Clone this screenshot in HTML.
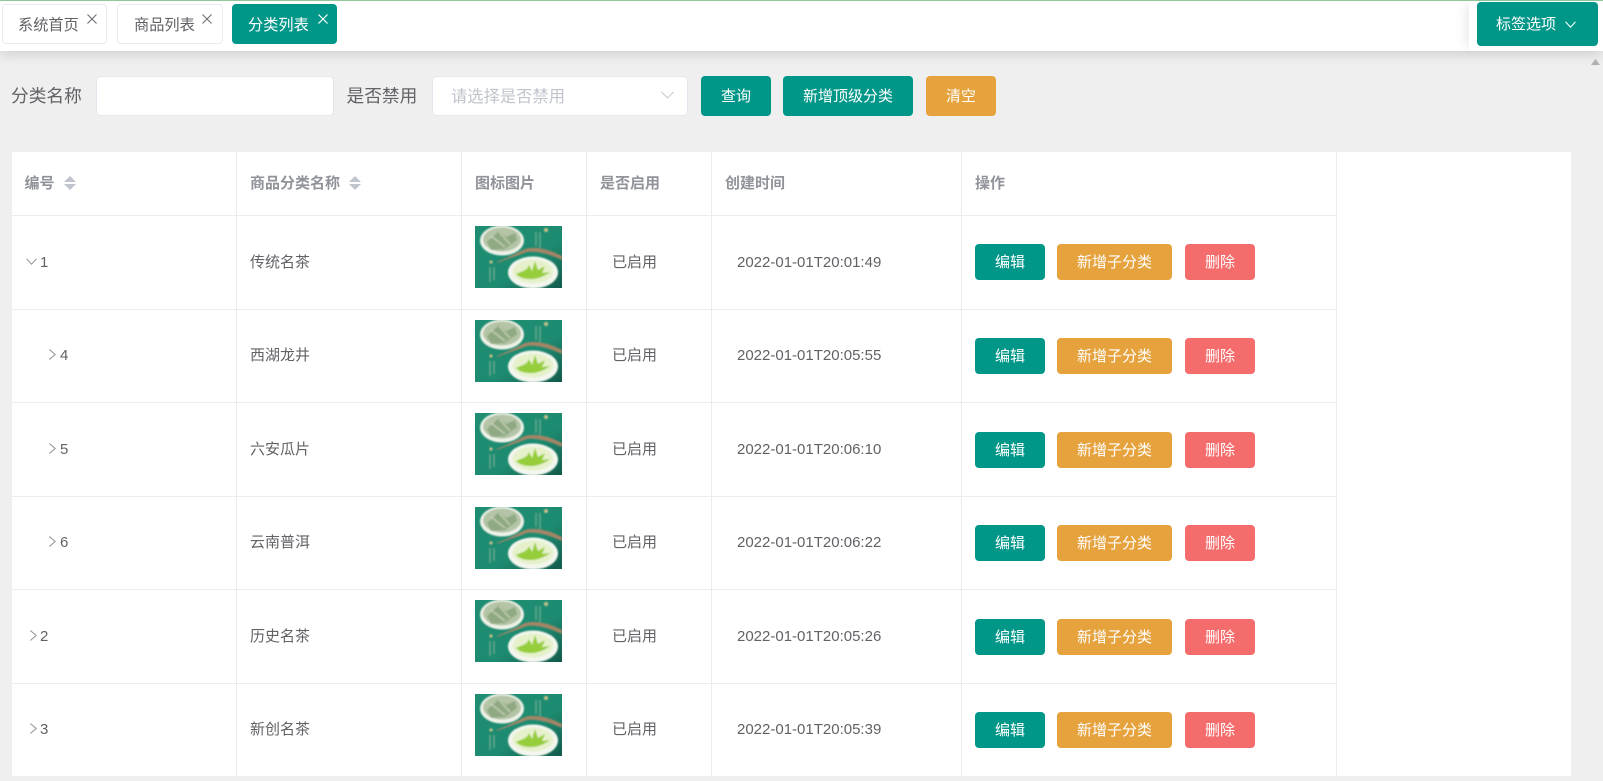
<!DOCTYPE html>
<html lang="zh">
<head>
<meta charset="utf-8">
<title>分类列表</title>
<style>
*{box-sizing:border-box}
html,body{margin:0;padding:0;width:1603px;height:781px;overflow:hidden;background:#efefef;font-family:"Liberation Sans","Noto Sans CJK SC",sans-serif;color:#606266}
.a{position:absolute}
#hd{left:0;top:0;width:1603px;height:51px;background:#fff;border-top:1px solid #8fc79a;box-shadow:0 3px 12px rgba(0,0,0,.14)}
.tab{position:absolute;top:4px;height:40px;border:1px solid #e9ebf0;border-radius:4px;background:#fff;font-size:15.2px;line-height:41px;color:#606266}
.tab span{position:absolute;top:0}
.tab svg{position:absolute;top:8px}
.tab.on{background:#009688;border-color:#009688;color:#fff}
#rt{left:1469px;top:1px;width:134px;height:50px;background:#fff;box-shadow:-8px 0 10px -4px rgba(0,0,0,.08)}
.btn{position:absolute;border-radius:4px;color:#fff;text-align:center;font-size:15px}
.t{background:#009688}.o{background:#e6a23c}.r{background:#f56c6c}
.lbl{position:absolute;top:76px;line-height:40px;font-size:17.7px;color:#606266}
.inp{position:absolute;top:76px;height:40px;background:#fff;border:1px solid #e4e7ed;border-radius:5px}
#tb{left:12px;top:152px;width:1559px;height:624px;background:#fff}
.vl{position:absolute;top:152px;height:624px;width:1px;background:#ececec}
.hl{position:absolute;left:12px;width:1325px;height:1px;background:#ececec}
.th{position:absolute;top:152px;line-height:64px;font-size:15px;font-weight:700;color:#909399}
.c{position:absolute;font-size:15px;line-height:22px;height:22px;white-space:nowrap;color:#606266}
.img{position:absolute;left:475px;width:87px;height:62px;display:block}
.b1,.b2,.b3{height:36px;line-height:37px}
.b1{left:975px;width:70px}.b2{left:1057px;width:115px}.b3{left:1185px;width:70px}
.up{position:absolute;width:0;height:0;border-left:6.5px solid transparent;border-right:6.5px solid transparent;border-bottom:6px solid #c0c4cc}
.dn{position:absolute;width:0;height:0;border-left:6.5px solid transparent;border-right:6.5px solid transparent;border-top:6px solid #c0c4cc}
</style>
</head>
<body>
<svg width="0" height="0" style="position:absolute">
<defs>
<linearGradient id="g" x1="0" y1="0" x2="1" y2="1"><stop offset="0" stop-color="#1f8d72"/><stop offset=".6" stop-color="#1d8b70"/><stop offset="1" stop-color="#125a4b"/></linearGradient>
<filter id="bl" x="-5%" y="-5%" width="110%" height="110%"><feGaussianBlur stdDeviation=".9"/></filter>
<symbol id="tea" viewBox="0 0 87 62" preserveAspectRatio="none">
<rect width="87" height="62" fill="url(#g)"/>
<g filter="url(#bl)">
<ellipse cx="27" cy="14.5" rx="22" ry="15" fill="#eef2e8"/>
<ellipse cx="27" cy="13.5" rx="19" ry="12" fill="#b4c4a6"/>
<path d="M12 16 L24 5 L31 11 L40 7 L42 14 L30 23 L16 24Z" fill="#8fa983"/>
<path d="M16 10 L30 21 M24 6 L35 18" stroke="#d3dcc3" stroke-width="1.6" stroke-opacity=".7"/>
<path d="M22 37 C32 33 42 30 52 26 C62 25 74 28 87 34 L87 30 C74 23 60 20 50 23 C42 27 32 32 22 36Z" fill="#a38566"/>
<ellipse cx="58" cy="46.5" rx="25" ry="16" fill="#f3f6ee"/>
<ellipse cx="58" cy="45.5" rx="20.5" ry="12" fill="#e6f1cc"/>
<path d="M41 48 C47 45 52 45 54 39 L57 45 L60 35 L63 44 L70 40 L67 47 L75 46 C67 52 60 53 56 53 C50 53 45 52 41 48Z" fill="#96ce3a"/>
<circle cx="71" cy="4" r="2" fill="#c9c08a"/>
<circle cx="16" cy="36" r="1.6" fill="#c9c08a"/>
<path d="M61 6V20M65 6V22M15 41V56M19 41V54" stroke="#8db79d" stroke-width="1.4" stroke-opacity=".7"/>
</g>
</symbol>
<symbol id="cr" viewBox="0 0 10 14"><path d="M1.5 1.5 L8 7 L1.5 12.5" fill="none" stroke="#8d9096" stroke-width="1.1"/></symbol>
<symbol id="cd" viewBox="0 0 14 10"><path d="M1.5 2 L7 8 L12.5 2" fill="none" stroke="#8d9096" stroke-width="1.1"/></symbol>
</defs>
</svg>

<div class="a" id="hd"></div>
<div class="a" id="rt"></div>

<div class="tab" style="left:2px;width:105px"><span style="left:15px">系统首页</span><svg width="12" height="12" style="left:83px" viewBox="0 0 12 12"><path d="M1.5 1.5L10.5 10.5M10.5 1.5L1.5 10.5" stroke="#6b6e73" stroke-width="1.1"/></svg></div>
<div class="tab" style="left:117px;width:106px"><span style="left:16px">商品列表</span><svg width="12" height="12" style="left:83px" viewBox="0 0 12 12"><path d="M1.5 1.5L10.5 10.5M10.5 1.5L1.5 10.5" stroke="#6b6e73" stroke-width="1.1"/></svg></div>
<div class="tab on" style="left:232px;width:105px"><span style="left:15px">分类列表</span><svg width="12" height="12" style="left:84px" viewBox="0 0 12 12"><path d="M1.5 1.5L10.5 10.5M10.5 1.5L1.5 10.5" stroke="#fff" stroke-width="1.2"/></svg></div>

<div class="btn t" style="left:1477px;top:2px;width:121px;height:44px;line-height:45px;text-align:left;padding-left:19px">标签选项<svg width="13" height="9" viewBox="0 0 14 10" style="position:absolute;left:87px;top:18px"><path d="M1.5 2L7 8L12.5 2" fill="none" stroke="#fff" stroke-width="1.2"/></svg></div>

<svg class="a" style="left:1590px;top:58px" width="11" height="8" viewBox="0 0 11 8"><path d="M5.5 1L10 7H1Z" fill="#b0b0b0"/></svg>

<div class="lbl" style="left:11px">分类名称</div>
<div class="inp" style="left:96px;width:238px"></div>
<div class="lbl" style="left:346.5px">是否禁用</div>
<div class="inp" style="left:432px;width:256px;font-size:16.3px;line-height:40px;padding-left:18px;color:#c0c4cc">请选择是否禁用<svg width="15" height="10" viewBox="0 0 14 10" style="position:absolute;left:227px;top:13px"><path d="M1 2L7 8L13 2" fill="none" stroke="#c6c9cf" stroke-width="1.1"/></svg></div>
<div class="btn t" style="left:701px;top:76px;width:70px;height:40px;line-height:41px">查询</div>
<div class="btn t" style="left:783px;top:76px;width:130px;height:40px;line-height:41px">新增顶级分类</div>
<div class="btn o" style="left:926px;top:76px;width:70px;height:40px;line-height:41px">清空</div>

<div class="a" id="tb"></div>
<div class="vl" style="left:236px"></div>
<div class="vl" style="left:461px"></div>
<div class="vl" style="left:586px"></div>
<div class="vl" style="left:711px"></div>
<div class="vl" style="left:961px"></div>
<div class="vl" style="left:1336px"></div>
<div class="hl" style="top:215px"></div>
<div class="hl" style="top:309px"></div>
<div class="hl" style="top:402px"></div>
<div class="hl" style="top:496px"></div>
<div class="hl" style="top:589px"></div>
<div class="hl" style="top:683px"></div>

<div class="th" style="left:24.5px">编号</div>
<div class="up" style="left:64px;top:176px"></div><div class="dn" style="left:64px;top:184px"></div>
<div class="th" style="left:250px">商品分类名称</div>
<div class="up" style="left:349px;top:176px"></div><div class="dn" style="left:349px;top:184px"></div>
<div class="th" style="left:475px">图标图片</div>
<div class="th" style="left:600px">是否启用</div>
<div class="th" style="left:725px">创建时间</div>
<div class="th" style="left:975px">操作</div>

<!-- row 1 -->
<svg class="a" style="left:25px;top:257px" width="13" height="9"><use href="#cd"/></svg>
<div class="c" style="left:40px;top:252px">1</div>
<div class="c" style="left:250px;top:252px">传统名茶</div>
<svg class="img" style="top:226px"><use href="#tea"/></svg>
<div class="c" style="left:612px;top:252px">已启用</div>
<div class="c" style="left:737px;top:252px">2022-01-01T20:01:49</div>
<div class="btn t b1" style="top:244px">编辑</div><div class="btn o b2" style="top:244px">新增子分类</div><div class="btn r b3" style="top:244px">删除</div>

<!-- row 2 -->
<svg class="a" style="left:48px;top:348px" width="9" height="13"><use href="#cr"/></svg>
<div class="c" style="left:60px;top:345px">4</div>
<div class="c" style="left:250px;top:345px">西湖龙井</div>
<svg class="img" style="top:320px"><use href="#tea"/></svg>
<div class="c" style="left:612px;top:345px">已启用</div>
<div class="c" style="left:737px;top:345px">2022-01-01T20:05:55</div>
<div class="btn t b1" style="top:338px">编辑</div><div class="btn o b2" style="top:338px">新增子分类</div><div class="btn r b3" style="top:338px">删除</div>

<!-- row 3 -->
<svg class="a" style="left:48px;top:442px" width="9" height="13"><use href="#cr"/></svg>
<div class="c" style="left:60px;top:439px">5</div>
<div class="c" style="left:250px;top:439px">六安瓜片</div>
<svg class="img" style="top:413px"><use href="#tea"/></svg>
<div class="c" style="left:612px;top:439px">已启用</div>
<div class="c" style="left:737px;top:439px">2022-01-01T20:06:10</div>
<div class="btn t b1" style="top:432px">编辑</div><div class="btn o b2" style="top:432px">新增子分类</div><div class="btn r b3" style="top:432px">删除</div>

<!-- row 4 -->
<svg class="a" style="left:48px;top:535px" width="9" height="13"><use href="#cr"/></svg>
<div class="c" style="left:60px;top:532px">6</div>
<div class="c" style="left:250px;top:532px">云南普洱</div>
<svg class="img" style="top:507px"><use href="#tea"/></svg>
<div class="c" style="left:612px;top:532px">已启用</div>
<div class="c" style="left:737px;top:532px">2022-01-01T20:06:22</div>
<div class="btn t b1" style="top:525px">编辑</div><div class="btn o b2" style="top:525px">新增子分类</div><div class="btn r b3" style="top:525px">删除</div>

<!-- row 5 -->
<svg class="a" style="left:29px;top:629px" width="9" height="13"><use href="#cr"/></svg>
<div class="c" style="left:40px;top:626px">2</div>
<div class="c" style="left:250px;top:626px">历史名茶</div>
<svg class="img" style="top:600px"><use href="#tea"/></svg>
<div class="c" style="left:612px;top:626px">已启用</div>
<div class="c" style="left:737px;top:626px">2022-01-01T20:05:26</div>
<div class="btn t b1" style="top:619px">编辑</div><div class="btn o b2" style="top:619px">新增子分类</div><div class="btn r b3" style="top:619px">删除</div>

<!-- row 6 -->
<svg class="a" style="left:29px;top:722px" width="9" height="13"><use href="#cr"/></svg>
<div class="c" style="left:40px;top:719px">3</div>
<div class="c" style="left:250px;top:719px">新创名茶</div>
<svg class="img" style="top:694px"><use href="#tea"/></svg>
<div class="c" style="left:612px;top:719px">已启用</div>
<div class="c" style="left:737px;top:719px">2022-01-01T20:05:39</div>
<div class="btn t b1" style="top:712px">编辑</div><div class="btn o b2" style="top:712px">新增子分类</div><div class="btn r b3" style="top:712px">删除</div>
</body>
</html>
